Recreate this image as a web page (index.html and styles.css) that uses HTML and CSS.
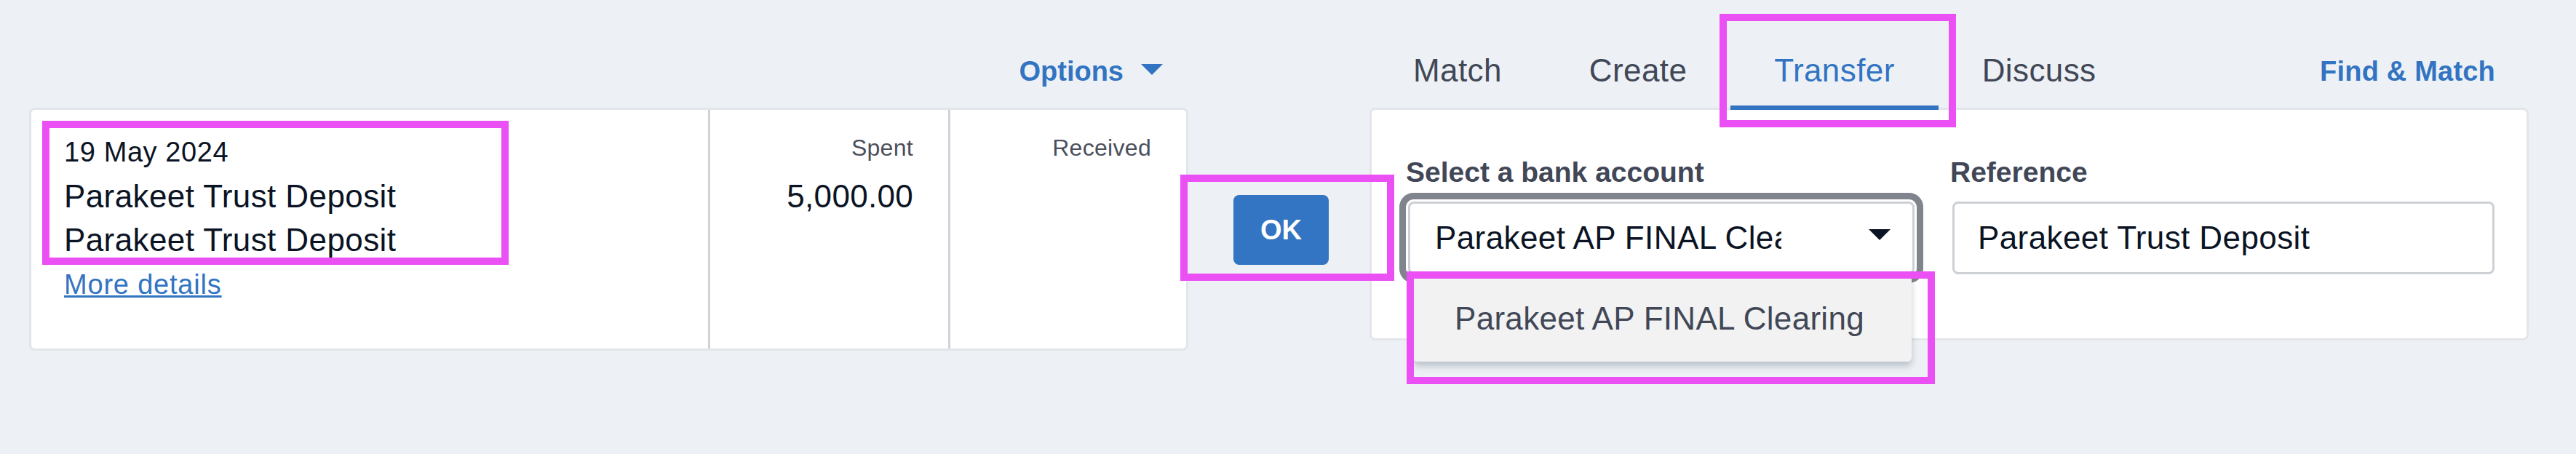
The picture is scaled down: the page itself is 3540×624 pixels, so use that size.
FILE: index.html
```html
<!DOCTYPE html>
<html lang="en">
<head>
<meta charset="utf-8">
<title>Bank reconciliation</title>
<link rel="stylesheet" href="styles.css">
</head>
<body>
<div class="page">
  <section class="left">
    <div class="left-head">
      <a class="options">Options <span class="caret"></span></a>
    </div>
    <div class="card stmt">
      <div class="col col-desc">
        <div class="date">19 May 2024</div>
        <div class="desc">Parakeet Trust Deposit</div>
        <div class="desc">Parakeet Trust Deposit</div>
        <a class="more">More details</a>
      </div>
      <div class="col col-amt">
        <div class="amt-head">Spent</div>
        <div class="amt">5,000.00</div>
      </div>
      <div class="col col-amt last">
        <div class="amt-head">Received</div>
      </div>
    </div>
  </section>

  <div class="ok-col">
    <button class="ok">OK</button>
  </div>

  <section class="right">
    <div class="tabs">
      <div class="tab">Match</div>
      <div class="tab">Create</div>
      <div class="tab active">Transfer</div>
      <div class="tab">Discuss</div>
      <a class="find">Find &amp; Match</a>
    </div>
    <div class="card form">
      <div class="field">
        <label class="label">Select a bank account</label>
        <div class="select-wrap">
          <div class="select">
            <span class="sel-text">Parakeet AP FINAL Clearing</span>
            <span class="arrow"></span>
          </div>
          <div class="menu">Parakeet AP FINAL Clearing</div>
        </div>
      </div>
      <div class="field">
        <label class="label">Reference</label>
        <div class="input">Parakeet Trust Deposit</div>
      </div>
    </div>
  </section>

  <div class="mark m1"></div>
  <div class="mark m2"></div>
  <div class="mark m3"></div>
  <div class="mark m4"></div>
</div>
</body>
</html>
```
FILE: styles.css
```css
html, body {
  margin: 0;
  background: #edf1f5;
}
body {
  font-family: "Liberation Sans", Arial, Helvetica, sans-serif;
}
.page {
  position: relative;
  display: flex;
  align-items: flex-start;
  width: 3540px;
  height: 624px;
  padding-left: 40px;
  box-sizing: border-box;
}

/* left */
.left {
  width: 1593px;
  flex: none;
}
.left-head {
  height: 148px;
  display: flex;
  justify-content: flex-end;
  padding-right: 35px;
  box-sizing: border-box;
}
.options {
  display: flex;
  align-items: flex-start;
  gap: 24px;
  padding-top: 73px;
  font-weight: bold;
  font-size: 38px;
  line-height: 50px;
  color: #3274c2;
}
.caret {
  margin-top: 15px;
  width: 0;
  height: 0;
  border-left: 15px solid transparent;
  border-right: 15px solid transparent;
  border-top: 15px solid #3274c2;
}
.card {
  background: #fff;
  border: 3px solid #e2e5e9;
  border-radius: 8px;
  box-sizing: border-box;
}
.stmt {
  display: flex;
  height: 334px;
}
.col {
  box-sizing: border-box;
  border-right: 3px solid #cfd2d7;
}
.col-desc {
  width: 933px;
  padding: 27px 0 0 45px;
}
.date {
  font-size: 38px;
  line-height: 62px;
  letter-spacing: 0.6px;
  color: #0b1424;
}
.desc {
  font-size: 44px;
  line-height: 60px;
  letter-spacing: 0.4px;
  color: #0b1424;
}
.more {
  display: block;
  font-size: 38px;
  line-height: 62px;
  letter-spacing: 0.8px;
  color: #3274c2;
  text-decoration: underline;
  text-decoration-thickness: 3px;
}
.col-amt {
  width: 330px;
  padding: 27px 48px 0 0;
  text-align: right;
}
.col-amt.last {
  flex: 1;
  border-right: 0;
}
.amt-head {
  font-size: 32px;
  line-height: 50px;
  letter-spacing: 0.3px;
  color: #4a4f5c;
}
.amt {
  margin-top: 12px;
  font-size: 44px;
  line-height: 60px;
  letter-spacing: 0.3px;
  color: #0b1424;
}

/* ok */
.ok-col {
  width: 249px;
  flex: none;
  padding: 268px 0 0 62px;
  box-sizing: border-box;
}
.ok {
  display: block;
  width: 131px;
  height: 96px;
  border: 0;
  border-radius: 8px;
  background: #3375c2;
  color: #fff;
  font-family: "Liberation Sans", Arial, sans-serif;
  font-weight: bold;
  font-size: 38px;
  padding: 0;
}

/* right */
.right {
  width: 1593px;
  flex: none;
}
.tabs {
  position: relative;
  z-index: 1;
  display: flex;
  height: 148px;
}
.tab {
  position: relative;
  height: 148px;
  padding: 72px 60px 0;
  box-sizing: border-box;
  font-size: 44px;
  line-height: 50px;
  letter-spacing: 0.4px;
  color: #414756;
}
.tab.active {
  color: #3274c2;
}
.tab.active::after {
  content: "";
  position: absolute;
  left: 0;
  right: 0;
  bottom: -3px;
  height: 6px;
  background: #3274c2;
}
.find {
  margin-left: auto;
  margin-right: 46px;
  padding-top: 73px;
  font-weight: bold;
  font-size: 38px;
  line-height: 50px;
  letter-spacing: 0.2px;
  color: #3274c2;
}
.form {
  display: grid;
  grid-template-columns: 696px 745px;
  column-gap: 52px;
  align-items: start;
  height: 320px;
  padding: 63px 0 0 50px;
}
.label {
  display: block;
  margin: 0 0 17px -3px;
  font-weight: bold;
  font-size: 39px;
  line-height: 46px;
  color: #414756;
}
.select-wrap {
  position: relative;
}
.select {
  display: flex;
  align-items: center;
  height: 100px;
  padding-left: 34px;
  border: 3px solid #cdd0d5;
  border-radius: 8px;
  box-sizing: border-box;
  background: #fff;
  box-shadow: 0 0 0 3px #fff, 0 0 0 12px #80848d;
}
.sel-text {
  width: 476px;
  overflow: hidden;
  white-space: nowrap;
  font-size: 44px;
  line-height: 94px;
  letter-spacing: 0.4px;
  color: #0b1424;
}
.arrow {
  margin: -9px 30px 0 auto;
  width: 0;
  height: 0;
  border-left: 15px solid transparent;
  border-right: 15px solid transparent;
  border-top: 15px solid #0b1424;
}
.menu {
  position: absolute;
  z-index: 2;
  left: 7px;
  top: 101px;
  width: 685px;
  height: 119px;
  padding-left: 57px;
  box-sizing: border-box;
  background: #f2f2f2;
  border-radius: 6px;
  box-shadow: 0 6px 10px rgba(40, 50, 70, 0.25);
  font-size: 44px;
  line-height: 119px;
  letter-spacing: 0.3px;
  color: #414756;
  white-space: nowrap;
}
.input {
  height: 100px;
  padding-left: 32px;
  border: 3px solid #cdd0d5;
  border-radius: 8px;
  box-sizing: border-box;
  font-size: 44px;
  line-height: 94px;
  letter-spacing: 0.4px;
  color: #0b1424;
}

/* annotation boxes */
.mark {
  position: absolute;
  z-index: 5;
  border: 10px solid #ea50f3;
  box-sizing: border-box;
  pointer-events: none;
}
.m1 { left: 58px; top: 166px; width: 641px; height: 198px; }
.m2 { left: 1622px; top: 240px; width: 294px; height: 146px; }
.m3 { left: 2363px; top: 19px; width: 325px; height: 156px; }
.m4 { left: 1933px; top: 373px; width: 726px; height: 155px; }
```
